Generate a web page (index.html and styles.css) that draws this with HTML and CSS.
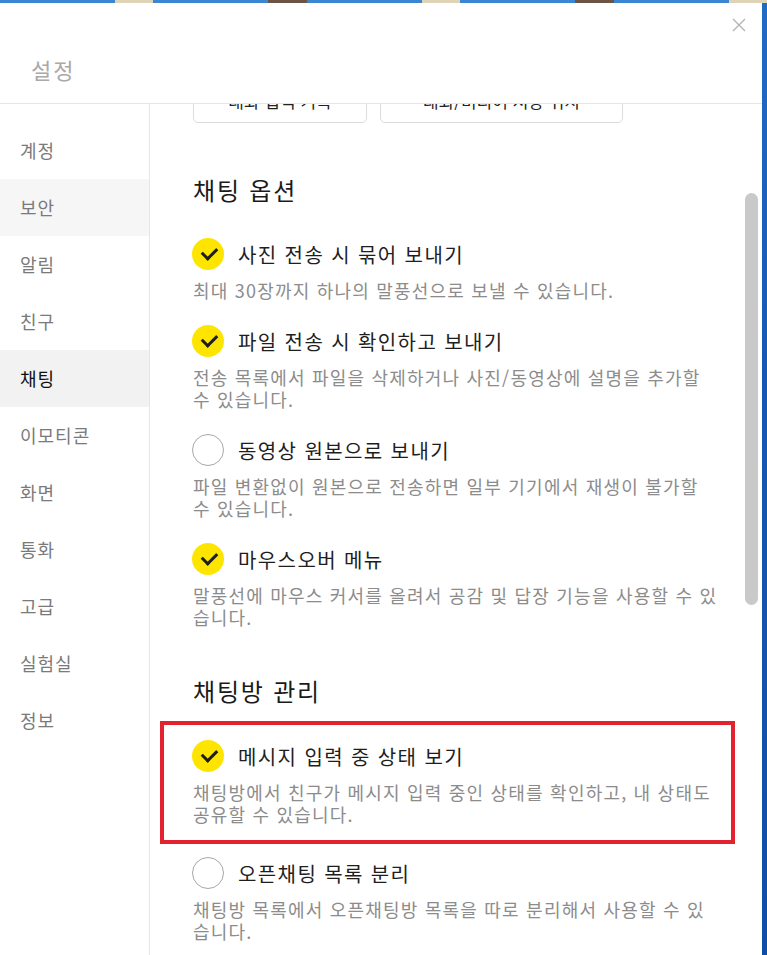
FILE: index.html
```html
<!DOCTYPE html>
<html lang="ko">
<head>
    <meta charset="UTF-8">
    <meta name="viewport" content="width=device-width, initial-scale=1.0">
    <title>설정</title>
    <link rel="stylesheet" href="styles.css">
</head>
<body>
    <div class="desktop-top">
        <span class="seg blue"></span><span class="seg tan"></span><span class="seg blue"></span><span class="seg brown"></span><span class="seg blue"></span><span class="seg tan"></span><span class="seg blue"></span><span class="seg brown"></span><span class="seg blue"></span><span class="seg tan"></span>
    </div>
    <div class="screen">
        <div class="dialog">
            <header class="dialog-header">
                <h1>설정</h1>
                <button class="close" aria-label="닫기">
                    <svg width="14" height="14" viewBox="0 0 14 14"><path d="M1 1L13 13M13 1L1 13" stroke="#b4b4b4" stroke-width="1.4" fill="none"/></svg>
                </button>
            </header>
            <div class="dialog-body">
                <nav class="sidebar">
                    <div class="nav-item">계정</div>
                    <div class="nav-item hover">보안</div>
                    <div class="nav-item">알림</div>
                    <div class="nav-item">친구</div>
                    <div class="nav-item active">채팅</div>
                    <div class="nav-item">이모티콘</div>
                    <div class="nav-item">화면</div>
                    <div class="nav-item">통화</div>
                    <div class="nav-item">고급</div>
                    <div class="nav-item">실험실</div>
                    <div class="nav-item">정보</div>
                </nav>
                <div class="content">
                    <div class="scroll-inner">
                        <div class="btn-row">
                            <button class="btn btn-short">대화 입력 기록</button>
                            <button class="btn btn-long">대화/미디어 저장 위치</button>
                        </div>

                        <h2 class="section-title">채팅 옵션</h2>
                        <div class="option">
                            <div class="option-row"><span class="check on"></span><span class="option-title">사진 전송 시 묶어 보내기</span></div>
                            <p class="option-desc">최대 30장까지 하나의 말풍선으로 보낼 수 있습니다.</p>
                        </div>
                        <div class="option">
                            <div class="option-row"><span class="check on"></span><span class="option-title">파일 전송 시 확인하고 보내기</span></div>
                            <p class="option-desc">전송 목록에서 파일을 삭제하거나 사진/동영상에 설명을 추가할 수 있습니다.</p>
                        </div>
                        <div class="option">
                            <div class="option-row"><span class="check"></span><span class="option-title">동영상 원본으로 보내기</span></div>
                            <p class="option-desc">파일 변환없이 원본으로 전송하면 일부 기기에서 재생이 불가할 수 있습니다.</p>
                        </div>
                        <div class="option">
                            <div class="option-row"><span class="check on"></span><span class="option-title">마우스오버 메뉴</span></div>
                            <p class="option-desc">말풍선에 마우스 커서를 올려서 공감 및 답장 기능을 사용할 수 있습니다.</p>
                        </div>

                        <h2 class="section-title second">채팅방 관리</h2>
                        <div class="option marked">
                            <div class="option-row"><span class="check on"></span><span class="option-title">메시지 입력 중 상태 보기</span></div>
                            <p class="option-desc">채팅방에서 친구가 메시지 입력 중인 상태를 확인하고, 내 상태도 공유할 수 있습니다.</p>
                        </div>
                        <div class="option">
                            <div class="option-row"><span class="check"></span><span class="option-title">오픈채팅 목록 분리</span></div>
                            <p class="option-desc">채팅방 목록에서 오픈채팅방 목록을 따로 분리해서 사용할 수 있습니다.</p>
                        </div>
                    </div>
                    <div class="scrollbar"></div>
                </div>
            </div>
        </div>
        <div class="desktop-side"></div>
    </div>
</body>
</html>
```

FILE: styles.css
```css
* {
    margin: 0;
    padding: 0;
    box-sizing: border-box;
    font-family: 'Noto Sans CJK KR', 'Noto Sans', sans-serif;
}
body {
    width: 767px;
    height: 955px;
    overflow: hidden;
    background: #1a5fb8;
    display: flex;
    flex-direction: column;
}
.desktop-top {
    height: 3px;
    flex-shrink: 0;
    display: flex;
}
.seg {
    flex: 1;
}
.seg.blue {
    background: #3b86d2;
    flex: 3;
}
.seg.tan {
    background: #e0d4b8;
}
.seg.brown {
    background: #6b5446;
}
.screen {
    flex: 1;
    min-height: 0;
    display: flex;
}
.dialog {
    width: 762px;
    background: #fff;
    display: flex;
    flex-direction: column;
    overflow: hidden;
}
.desktop-side {
    flex: 1;
    background: linear-gradient(180deg, #1f6cc4, #1459b0 40%, #0f4fa3);
}
.dialog-header {
    height: 101px;
    flex-shrink: 0;
    border-bottom: 1px solid #e6e6e6;
    display: flex;
    justify-content: space-between;
    align-items: flex-start;
    padding: 0 13px 0 31px;
}
.dialog-header h1 {
    font-size: 22px;
    font-weight: 400;
    color: #a9a9a9;
    letter-spacing: 2px;
    margin-top: 50px;
}
.close {
    border: none;
    background: none;
    margin-top: 12px;
    width: 20px;
    height: 20px;
    display: flex;
    align-items: center;
    justify-content: center;
}
.dialog-body {
    flex: 1;
    min-height: 0;
    display: flex;
    overflow: hidden;
}
.sidebar {
    width: 150px;
    border-right: 1px solid #e6e6e6;
    padding-top: 18px;
}
.nav-item {
    height: 57px;
    line-height: 57px;
    padding-left: 20px;
    font-size: 18px;
    letter-spacing: 1px;
    color: #7a7a7a;
}
.nav-item.hover {
    background: #f6f6f6;
}
.nav-item.active {
    background: #f2f2f2;
    color: #111;
}
.content {
    flex: 1;
    position: relative;
    overflow: hidden;
    padding: 0 42px 0 43px;
}
.scroll-inner {
    margin-top: -27px;
}
.btn-row {
    display: flex;
    gap: 13px;
}
.btn {
    height: 46px;
    border: 1px solid #dcdcdc;
    border-radius: 5px;
    background: #fff;
    font-size: 17px;
    color: #222;
}
.btn-short {
    width: 174px;
}
.btn-long {
    width: 243px;
}
.section-title {
    font-size: 24px;
    font-weight: 400;
    color: #1a1a1a;
    line-height: 30px;
    margin: 52px 0 32px;
    letter-spacing: 1.8px;
}
.section-title.second {
    margin-top: 48px;
    margin-bottom: 33px;
}
.option {
    margin-bottom: 23px;
}
.option-row {
    height: 34px;
    display: flex;
    align-items: center;
    gap: 14px;
    margin-left: -1px;
}
.check {
    width: 32px;
    height: 32px;
    border-radius: 50%;
    border: 1.5px solid #a8a8a8;
    background: #fff;
    position: relative;
}
.check.on {
    border: none;
    background: #fee500;
}
.check.on::after {
    content: "";
    position: absolute;
    left: 10px;
    top: 8px;
    width: 12px;
    height: 7px;
    border-left: 3px solid #1e1e1e;
    border-bottom: 3px solid #1e1e1e;
    transform: rotate(-45deg);
    transform-origin: center;
    margin-top: 1px;
}
.option-title {
    font-size: 20px;
    color: #1e1e1e;
    letter-spacing: 1.4px;
}
.option-desc {
    margin-top: 8px;
    font-size: 18px;
    line-height: 22px;
    color: #8c8c8c;
    letter-spacing: 1.2px;
    word-break: break-all;
}
.option.marked {
    position: relative;
    margin-bottom: 31px;
}
.option.marked::before {
    content: "";
    position: absolute;
    left: -33px;
    right: -15px;
    top: -18px;
    bottom: -19px;
    border: 4px solid #e3222f;
}
.scrollbar {
    position: absolute;
    right: 4px;
    top: 89px;
    width: 13px;
    height: 412px;
    border-radius: 7px;
    background: #c9c9c9;
}
```
